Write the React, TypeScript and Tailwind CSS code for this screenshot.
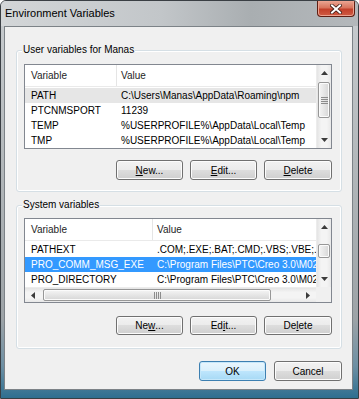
import React from "react";

const FONT = "font-['Segoe_UI','Liberation_Sans',Arial,sans-serif]";

function Up() {
  return (
    <svg width="7" height="4" viewBox="0 0 7 4">
      <polygon points="0,4 3.5,0 7,4" fill="#3c3c3c" />
    </svg>
  );
}
function Down() {
  return (
    <svg width="7" height="4" viewBox="0 0 7 4">
      <polygon points="0,0 3.5,4 7,0" fill="#3c3c3c" />
    </svg>
  );
}
function Left() {
  return (
    <svg width="4" height="7" viewBox="0 0 4 7">
      <polygon points="4,0 0,3.5 4,7" fill="#3c3c3c" />
    </svg>
  );
}
function Right() {
  return (
    <svg width="4" height="7" viewBox="0 0 4 7">
      <polygon points="0,0 4,3.5 0,7" fill="#3c3c3c" />
    </svg>
  );
}

function VGrip() {
  return (
    <div className="flex flex-col gap-[1px] items-center">
      <div className="w-[7px] h-[1px] bg-[#8c8c8c]" />
      <div className="w-[7px] h-[1px] bg-[#8c8c8c]" />
      <div className="w-[7px] h-[1px] bg-[#8c8c8c]" />
      <div className="w-[7px] h-[1px] bg-[#8c8c8c]" />
    </div>
  );
}
function HGrip() {
  return (
    <div className="flex flex-row gap-[1px] items-center">
      <div className="h-[7px] w-[1px] bg-[#8c8c8c]" />
      <div className="h-[7px] w-[1px] bg-[#8c8c8c]" />
      <div className="h-[7px] w-[1px] bg-[#8c8c8c]" />
      <div className="h-[7px] w-[1px] bg-[#8c8c8c]" />
    </div>
  );
}

function VScroll({ gap, thumb }: { gap: number; thumb: number }) {
  return (
    <div className="w-[15px] h-full flex flex-col bg-[linear-gradient(to_right,#e4e4e4,#f4f4f4_30%,#f4f4f4_70%,#e8e8e8)] border-l border-[#ececec]">
      <div className="h-[16px] flex items-center justify-center shrink-0">
        <Up />
      </div>
      <div className="flex-1 flex flex-col px-[1px]">
        <div className={gap === 1 ? "h-[1px]" : "h-[9px]"} />
        <div
          className={
            (thumb === 36 ? "h-[36px]" : "h-[14px]") +
            " rounded-[2px] border border-[#979797] bg-[linear-gradient(to_right,#f5f5f5,#e6e6e6_50%,#d6d6d6)] flex items-center justify-center shadow-[inset_0_0_0_1px_#fbfbfb]"
          }
        >
          {thumb === 36 ? <VGrip /> : null}
        </div>
      </div>
      <div className="h-[16px] flex items-center justify-center shrink-0">
        <Down />
      </div>
    </div>
  );
}

function HScroll() {
  return (
    <div className="h-[15px] flex flex-row">
      <div className="flex-1 flex flex-row bg-[linear-gradient(#e4e4e4,#f4f4f4_30%,#f4f4f4_70%,#e8e8e8)] border-t border-[#ececec]">
        <div className="w-[16px] flex items-center justify-center shrink-0">
          <Left />
        </div>
        <div className="flex-1 flex flex-row py-[1px]">
          <div className="w-[2px]" />
          <div className="w-[228px] rounded-[2px] border border-[#979797] bg-[linear-gradient(#f5f5f5,#e6e6e6_50%,#d6d6d6)] flex items-center justify-center shadow-[inset_0_0_0_1px_#fbfbfb]">
            <HGrip />
          </div>
        </div>
        <div className="w-[16px] flex items-center justify-center shrink-0">
          <Right />
        </div>
      </div>
      <div className="w-[15px] bg-[#f0f0f0]" />
    </div>
  );
}

type Row = { name: string; value: string; sel?: "inactive" | "active" };

function Header({ col1 }: { col1: string }) {
  return (
    <div className="h-[22px] flex flex-row border-b border-[#eaeaea] bg-white text-[#1e1e1e]">
      <div className={col1 + " shrink-0 pl-[6px] flex items-center border-r border-[#e5e5e5]"}>
        Variable
      </div>
      <div className="pl-[4px] flex items-center">Value</div>
    </div>
  );
}

function Rows({ rows, col1 }: { rows: Row[]; col1: string }) {
  return (
    <div className="pt-[1px] flex flex-col">
      {rows.map((r) => (
        <div
          key={r.name}
          className={
            "h-[15px] flex flex-row items-center whitespace-nowrap overflow-hidden " +
            (r.sel === "active"
              ? "bg-[#3399ff] text-white"
              : r.sel === "inactive"
              ? "bg-[#e6e6e6] text-black"
              : "text-black")
          }
        >
          <div className={col1 + " shrink-0 pl-[6px] overflow-hidden"}>{r.name}</div>
          <div className="pl-[4px]">{r.value}</div>
        </div>
      ))}
    </div>
  );
}

function Btn({
  children,
  def,
  w,
}: {
  children: React.ReactNode;
  def?: boolean;
  w: string;
}) {
  return (
    <div
      className={
        w +
        " h-full rounded-[3px] border flex items-center justify-center text-black " +
        (def
          ? "border-[#3c7fb1] bg-[linear-gradient(#eaf6fd,#d9f0fc_50%,#bee6fd_50%,#a7d9f5)] shadow-[inset_0_0_0_1px_#c5e7fa]"
          : "border-[#707070] bg-[linear-gradient(#f2f2f2,#ebebeb_50%,#dddddd_50%,#cfcfcf)] shadow-[inset_0_0_0_1px_#fcfcfc]")
      }
    >
      {children}
    </div>
  );
}

function U({ children }: { children: React.ReactNode }) {
  return <span className="underline underline-offset-[1px]">{children}</span>;
}

function Group({
  label,
  children,
  className,
}: {
  label: string;
  children: React.ReactNode;
  className: string;
}) {
  return (
    <div
      className={
        "relative w-[326px] ml-[11px] border border-[#d5dfe5] rounded-[3px] shadow-[inset_0_0_0_1px_#ffffff] " +
        className
      }
    >
      <span className="absolute left-[5px] -top-[8px] px-[1px] bg-[#f0f0f0] leading-[14px] text-black">
        {label}
      </span>
      {children}
    </div>
  );
}

export default function App() {
  const userRows: Row[] = [
    { name: "PATH", value: "C:\\Users\\Manas\\AppData\\Roaming\\npm", sel: "inactive" },
    { name: "PTCNMSPORT", value: "11239" },
    { name: "TEMP", value: "%USERPROFILE%\\AppData\\Local\\Temp" },
    { name: "TMP", value: "%USERPROFILE%\\AppData\\Local\\Temp" },
  ];
  const sysRows: Row[] = [
    { name: "PATHEXT", value: ".COM;.EXE;.BAT;.CMD;.VBS;.VBE;.JS;.JSE;.WSF" },
    { name: "PRO_COMM_MSG_EXE", value: "C:\\Program Files\\PTC\\Creo 3.0\\M020\\Common Files", sel: "active" },
    { name: "PRO_DIRECTORY", value: "C:\\Program Files\\PTC\\Creo 3.0\\M020\\Common Files" },
  ];

  return (
    <div
      className={
        FONT +
        " w-[359px] h-[399px] flex flex-col border border-[#3a3f44] rounded-t-[6px] bg-[linear-gradient(#c9cdd0,#b3b8bb_40%,#9da3a7_80%,#6d8fa3_92%,#2f6f90)] text-[10px] overflow-hidden"
      }
    >
      {/* title bar */}
      <div className="h-[25px] shrink-0 flex flex-row items-start bg-[linear-gradient(to_right,#d3d6d8,#c2c6c9_45%,#a9aeb1_70%,#b4b8bb)]">
        <div className="pl-[4px] pt-[5px] text-[11px] leading-[14px] text-black">
          Environment Variables
        </div>
        <div className="ml-auto mr-[3px] w-[38px] h-[16px] rounded-b-[4px] border border-t-0 border-[#5e1d12] bg-[linear-gradient(#e9a592,#d8745d_45%,#c3402a_55%,#cf5c44)] flex items-center justify-center shadow-[inset_0_0_0_1px_#eda28f]">
          <svg width="12" height="10" viewBox="0 0 12 10">
            <path d="M2 1.5 L10 8.5 M10 1.5 L2 8.5" stroke="#3a1a14" strokeWidth="3.6" strokeLinecap="square" />
            <path d="M2 1.5 L10 8.5 M10 1.5 L2 8.5" stroke="#ffffff" strokeWidth="2" strokeLinecap="square" />
          </svg>
        </div>
      </div>

      {/* client */}
      <div className="ml-[3px] mr-[5px] mb-[8px] flex-1 border border-[#7c8287] bg-[#f0f0f0] flex flex-col">
        <Group label="User variables for Manas" className="mt-[23px] pt-[13px] pl-[7px] pr-[9px] pb-[11px]">
          <div className="h-[85px] border border-[#828790] bg-white flex flex-row">
            <div className="flex-1 flex flex-col overflow-hidden">
              <Header col1="w-[92px]" />
              <Rows rows={userRows} col1="w-[92px]" />
            </div>
            <VScroll gap={1} thumb={36} />
          </div>
          <div className="mt-[11px] h-[20px] flex flex-row justify-end gap-[7px]">
            <Btn w="w-[67px]">
              <U>N</U>ew...
            </Btn>
            <Btn w="w-[67px]">
              <U>E</U>dit...
            </Btn>
            <Btn w="w-[68px]">
              <U>D</U>elete
            </Btn>
          </div>
        </Group>

        <Group label="System variables" className="mt-[13px] pt-[12px] pl-[7px] pr-[9px] pb-[13px]">
          <div className="h-[85px] border border-[#828790] bg-white flex flex-col">
            <div className="h-[68px] flex flex-row">
              <div className="flex-1 flex flex-col overflow-hidden">
                <Header col1="w-[128px]" />
                <Rows rows={sysRows} col1="w-[128px]" />
              </div>
              <VScroll gap={9} thumb={14} />
            </div>
            <HScroll />
          </div>
          <div className="mt-[13px] h-[19px] flex flex-row justify-end gap-[7px]">
            <Btn w="w-[67px]">
              Ne<U>w</U>...
            </Btn>
            <Btn w="w-[67px]">
              Ed<U>i</U>t...
            </Btn>
            <Btn w="w-[68px]">
              De<U>l</U>ete
            </Btn>
          </div>
        </Group>

        <div className="mt-[12px] h-[20px] w-[326px] ml-[11px] flex flex-row justify-end gap-[8px]">
          <Btn w="w-[67px]" def>
            OK
          </Btn>
          <Btn w="w-[68px]">Cancel</Btn>
        </div>
      </div>
    </div>
  );
}
